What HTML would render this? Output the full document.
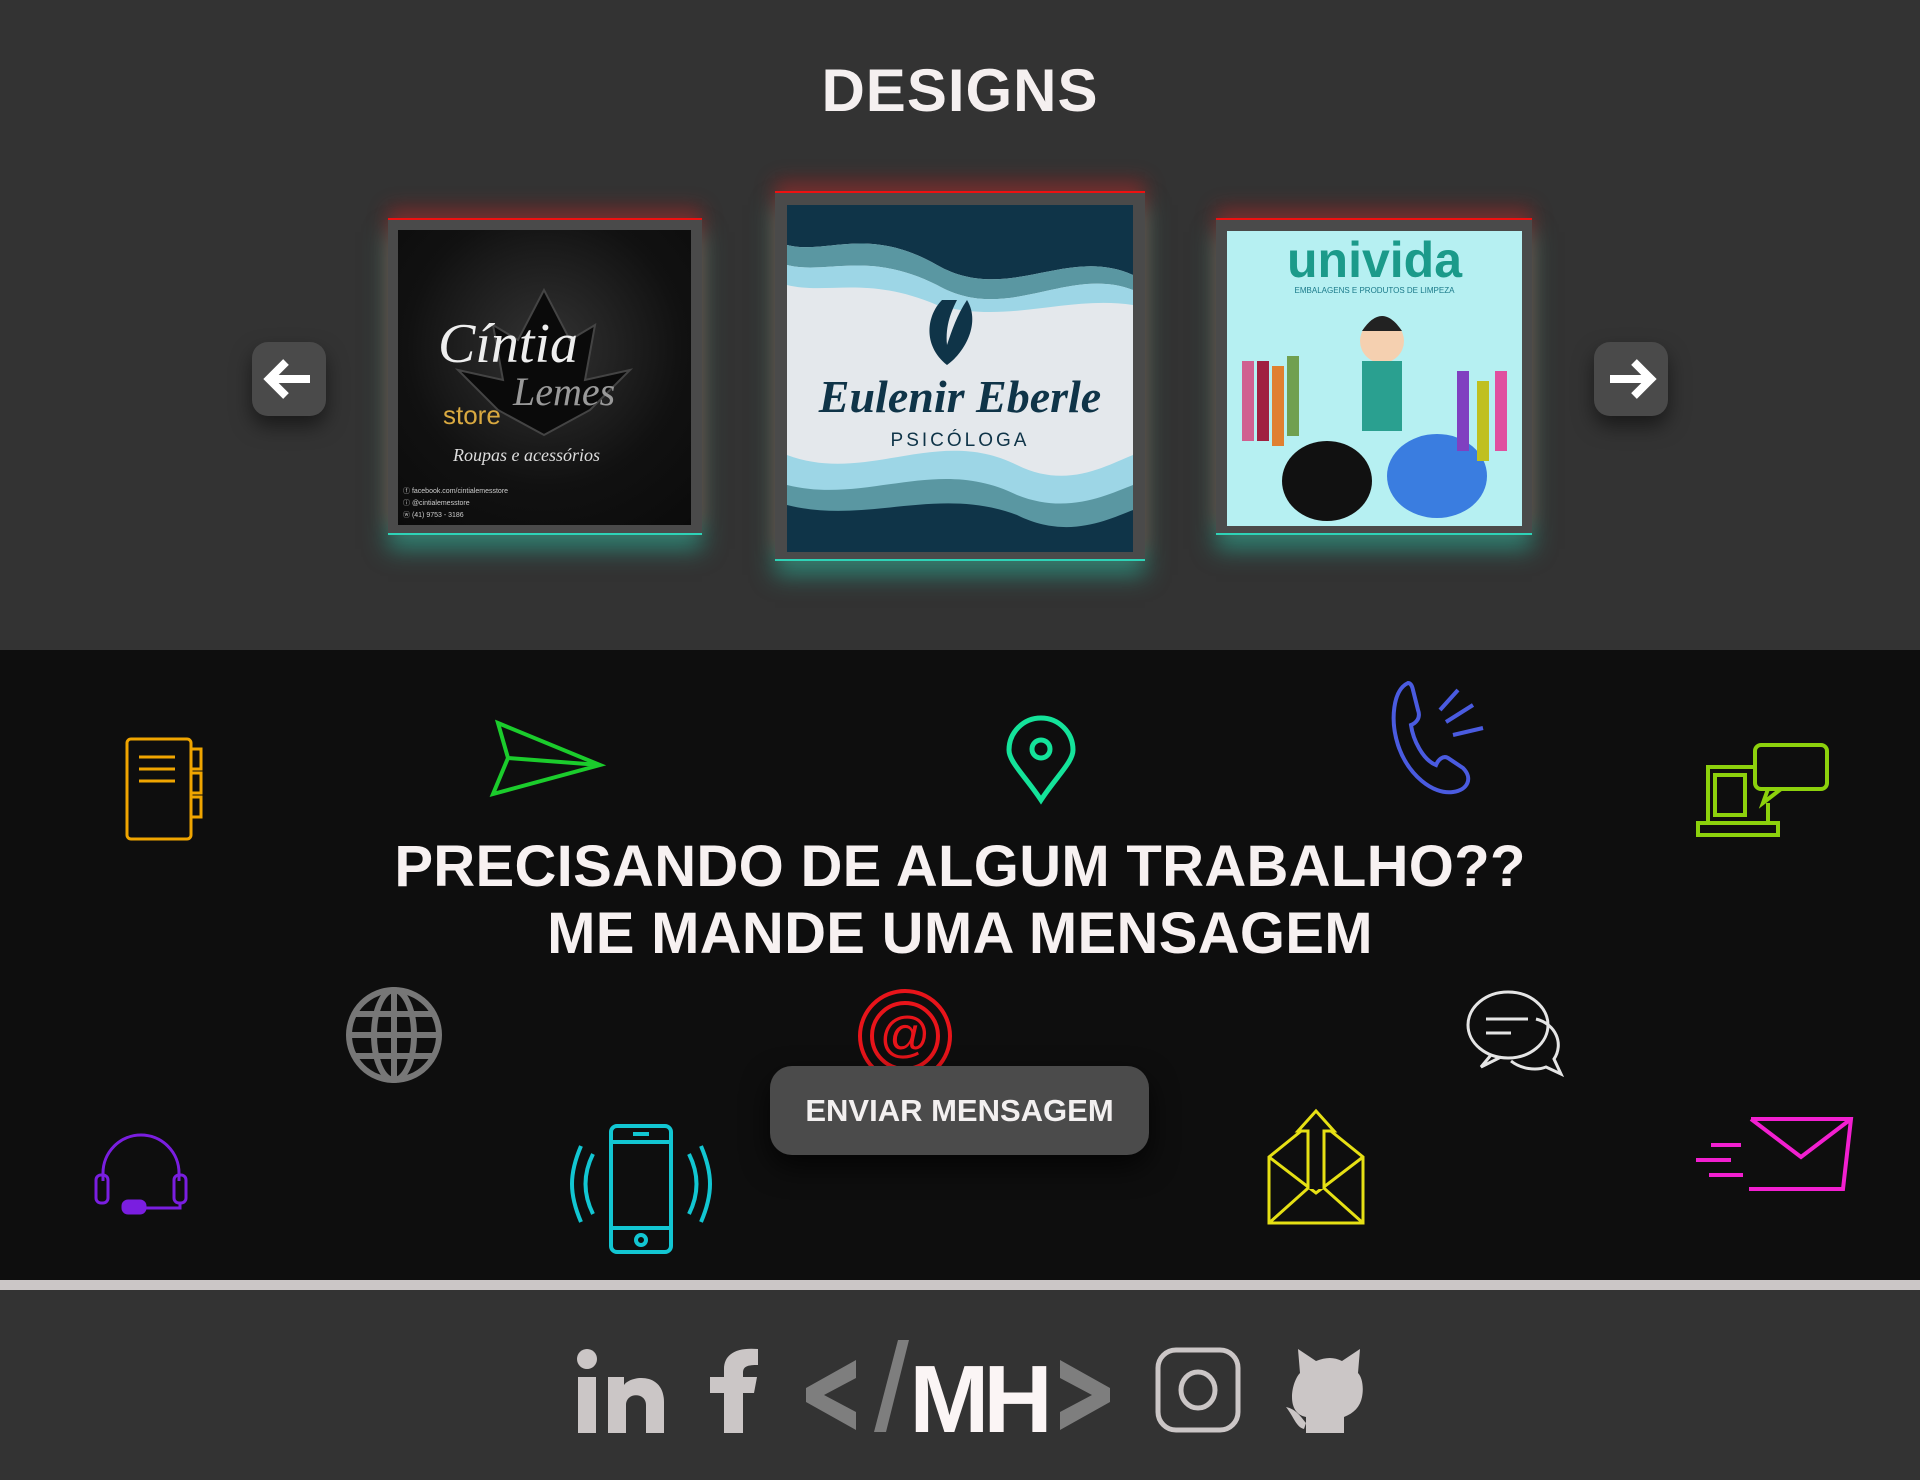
<!DOCTYPE html>
<html><head><meta charset="utf-8"><style>
*{margin:0;padding:0;box-sizing:border-box}
body{width:1920px;height:1480px;background:#333;font-family:"Liberation Sans",sans-serif;position:relative;overflow:hidden}
.abs{position:absolute}
h1{position:absolute;top:56px;left:0;width:1920px;text-align:center;color:#f5f0f0;font-size:60px;font-weight:bold;letter-spacing:1px}
.card{position:absolute;background:#4a4a4a;border-top:2px solid #e11;border-bottom:2px solid #2ed3b7;box-shadow:0 -10px 18px rgba(200,30,30,.45),0 14px 22px rgba(40,210,180,.5)}
.inner{position:absolute;overflow:hidden}
.arrow{position:absolute;width:74px;height:74px;background:#4a4a4a;border-radius:16px;box-shadow:0 10px 20px rgba(0,0,0,.5)}
.dark{position:absolute;top:650px;left:0;width:1920px;height:630px;background:#0e0e0e}
.bar{position:absolute;top:1280px;left:0;width:1920px;height:10px;background:#cbc6c6}
.head{position:absolute;left:0;width:1920px;text-align:center;color:#f7f1f1;font-weight:bold;font-size:58px;letter-spacing:.3px}
.btn{position:absolute;left:770px;top:1066px;width:379px;height:89px;background:#4b4b4b;border-radius:22px;color:#f3f0f0;font-size:31px;font-weight:bold;text-align:center;line-height:89px;box-shadow:0 12px 28px rgba(0,0,0,.7)}
svg{position:absolute;overflow:visible}
</style></head><body>
<h1>DESIGNS</h1>

<div class="card" style="left:388px;top:218px;width:314px;height:317px">
 <div class="inner" style="left:10px;top:10px;width:293px;height:295px;background:radial-gradient(circle at 50% 40%,#333 0,#111 60%,#0b0b0b 100%)">
  <svg width="293" height="295"><path d="M146 60 L120 110 L95 95 L105 150 L60 140 L100 180 L146 205 L192 180 L232 140 L187 150 L197 95 L172 110Z" fill="#0a0a0a" stroke="#444" stroke-width="2"/></svg>
  <div class="abs" style="left:40px;top:82px;font-family:'Liberation Serif',serif;font-style:italic;font-size:56px;color:#eee">Cíntia</div>
  <div class="abs" style="left:115px;top:138px;font-family:'Liberation Serif',serif;font-style:italic;font-size:40px;color:#999">Lemes</div>
  <div class="abs" style="left:45px;top:170px;font-size:26px;color:#d9a940">store</div>
  <div class="abs" style="left:55px;top:215px;font-family:'Liberation Serif',serif;font-style:italic;font-size:18px;color:#ddd">Roupas e acessórios</div>
  <div class="abs" style="left:5px;top:256px;font-size:7px;color:#ccc;line-height:12px">ⓕ facebook.com/cintialemesstore<br>ⓘ @cintialemesstore<br>ⓦ (41) 9753 - 3186</div>
 </div>
</div>

<div class="card" style="left:775px;top:191px;width:370px;height:370px">
 <div class="inner" style="left:12px;top:12px;width:346px;height:347px;background:#e4e8ec">
  <svg width="346" height="347"><path d="M0 0H346V70 C280 40 220 100 150 60 C80 20 40 50 0 40Z" fill="#0f3448"/>
  <path d="M0 40 C40 50 80 20 150 60 C220 100 280 40 346 70 V85 C280 60 220 120 150 80 C80 45 40 70 0 60Z" fill="#5a97a2"/>
  <path d="M0 60 C40 70 80 45 150 80 C220 120 280 60 346 85 V100 C280 90 220 120 150 100 C80 70 40 90 0 80Z" fill="#9dd6e6"/>
  <path d="M0 250 C80 280 150 220 230 260 C280 285 320 260 346 250 V347 H0Z" fill="#9dd6e6"/>
  <path d="M0 280 C80 300 150 250 230 290 C280 310 320 290 346 280 V347 H0Z" fill="#5a97a2"/>
  <path d="M0 300 C80 320 150 280 230 310 C280 335 320 315 346 305 V347 H0Z" fill="#0f3448"/>
  <path d="M155 95 C140 110 135 140 160 160 C175 150 195 120 180 95 C170 110 165 125 160 140 C158 120 165 105 170 95Z" fill="#0f3448"/></svg>
  <div class="abs" style="left:0;width:346px;top:165px;text-align:center;font-family:'Liberation Serif',serif;font-style:italic;font-weight:bold;font-size:46px;color:#0f3448">Eulenir Eberle</div>
  <div class="abs" style="left:0;width:346px;top:225px;text-align:center;font-size:19px;letter-spacing:3px;color:#0f3448">PSICÓLOGA</div>
 </div>
</div>

<div class="card" style="left:1216px;top:218px;width:316px;height:317px">
 <div class="inner" style="left:11px;top:11px;width:295px;height:295px;background:#b6f0f2">
  <div class="abs" style="left:0;width:295px;top:0;text-align:center;font-weight:bold;font-size:50px;color:#1b9a8a">univida</div>
  <div class="abs" style="left:0;width:295px;top:55px;text-align:center;font-size:8px;color:#1b7a8a">EMBALAGENS E PRODUTOS DE LIMPEZA</div>
  <svg width="295" height="295"><rect x="15" y="130" width="12" height="80" fill="#d06090"/><rect x="30" y="130" width="12" height="80" fill="#a02040"/><rect x="45" y="135" width="12" height="80" fill="#e08030"/><rect x="60" y="125" width="12" height="80" fill="#70a050"/>
  <circle cx="155" cy="110" r="22" fill="#f5d0b0"/><path d="M135 100 Q155 70 175 100Z" fill="#222"/><rect x="135" y="130" width="40" height="70" fill="#2aa090"/>
  <ellipse cx="100" cy="250" rx="45" ry="40" fill="#111"/><ellipse cx="210" cy="245" rx="50" ry="42" fill="#3a7de0"/>
  <rect x="230" y="140" width="12" height="80" fill="#8040c0"/><rect x="250" y="150" width="12" height="80" fill="#c0c020"/><rect x="268" y="140" width="12" height="80" fill="#e050a0"/></svg>
 </div>
</div>

<div class="arrow" style="left:252px;top:342px"><svg width="74" height="74"><path d="M58 37H18M34 20L17 37L34 54" stroke="#fff" stroke-width="8" fill="none"/></svg></div>
<div class="arrow" style="left:1594px;top:342px"><svg width="74" height="74"><path d="M16 37H56M40 20L57 37L40 54" stroke="#fff" stroke-width="8" fill="none"/></svg></div>

<div class="dark"></div>
<div class="bar"></div>

<svg style="left:125px;top:737px" width="80" height="104" fill="none" stroke="#f0a500" stroke-width="3"><rect x="2" y="2" width="64" height="100" rx="4"/><path d="M66 12h10v20h-10M66 36h10v20h-10M66 60h10v20h-10M14 20h36M14 32h36M14 44h36"/></svg>
<svg style="left:490px;top:720px" width="112" height="76" fill="none" stroke="#1bcc2c" stroke-width="4"><path d="M8 3L110 45L3 74L18 38Z M18 38L110 45"/></svg>
<svg style="left:1006px;top:717px" width="70" height="86" fill="none" stroke="#14e39a" stroke-width="5"><path d="M35 83C20 60 3 45 3 33A32 32 0 0 1 67 33C67 45 50 60 35 83Z"/><circle cx="35" cy="32" r="9"/></svg>
<svg style="left:1388px;top:680px" width="100" height="116" fill="none" stroke="#4a5be0" stroke-width="4"><path d="M20 3C5 10 2 40 10 65C20 95 45 115 65 112C80 110 85 98 75 88L60 78C55 75 50 80 48 85C35 80 25 60 23 45C28 43 33 38 30 30L25 10C24 5 22 3 20 3Z M52 30L70 10M58 42L85 25M65 55L95 48"/></svg>
<svg style="left:1693px;top:743px" width="136" height="96" fill="none" stroke="#8cd10c" stroke-width="4"><rect x="62" y="2" width="72" height="44" rx="6"/><path d="M75 46L70 60L88 46M60 24H15V80H75V60M5 80H85V92H5Z"/><rect x="22" y="32" width="30" height="40"/></svg>
<svg style="left:345px;top:986px" width="98" height="98" fill="none" stroke="#777" stroke-width="6"><circle cx="49" cy="49" r="45"/><ellipse cx="49" cy="49" rx="20" ry="45"/><path d="M49 4V94M4 49H94M10 28H88M10 70H88"/></svg>
<svg style="left:855px;top:994px" width="100" height="78" fill="none" stroke="#e8141a" stroke-width="4"><circle cx="50" cy="42" r="45"/><circle cx="50" cy="42" r="33"/><text x="50" y="58" text-anchor="middle" font-size="50" fill="#e8141a" stroke="none" font-family="Liberation Sans">@</text></svg>
<svg style="left:1466px;top:989px" width="100" height="96" fill="none" stroke="#e5e5e5" stroke-width="3"><ellipse cx="42" cy="36" rx="40" ry="33"/><path d="M20 30H62M20 44H45M25 66L15 78L35 68M70 30C90 35 98 55 88 70L95 85L80 78C70 82 55 80 45 72"/></svg>
<svg style="left:93px;top:1133px" width="96" height="80" fill="none" stroke="#7a1ee0" stroke-width="3"><path d="M10 48V40A38 38 0 0 1 86 40V48"/><rect x="3" y="42" width="12" height="28" rx="5"/><rect x="81" y="42" width="12" height="28" rx="5"/><path d="M87 70V75H45"/><rect x="30" y="68" width="22" height="12" rx="5" fill="#7a1ee0"/></svg>
<svg style="left:573px;top:1124px" width="136" height="130" fill="none" stroke="#12c6d2" stroke-width="4"><rect x="38" y="2" width="60" height="126" rx="6"/><path d="M38 18H98M38 104H98M60 10H76"/><circle cx="68" cy="116" r="5"/><path d="M20 30C10 50 10 70 20 90M8 22C-4 50 -4 70 8 98M116 30C126 50 126 70 116 90M128 22C140 50 140 70 128 98"/></svg>
<svg style="left:1266px;top:1109px" width="100" height="116" fill="none" stroke="#e6e014" stroke-width="3"><path d="M3 48V114H97V48L50 10L3 48Z M3 114L50 72L97 114 M3 48L50 84L97 48"/><path d="M42 80V22H32L50 2L68 22H58V80" fill="#0e0e0e"/></svg>
<svg style="left:1691px;top:1117px" width="162" height="76" fill="none" stroke="#f21fd0" stroke-width="4"><path d="M60 2H160L152 72H58 M60 2L110 40L160 2"/><path d="M20 28H50M5 43H40M18 58H52"/></svg>

<div class="head" style="top:833px">PRECISANDO DE ALGUM TRABALHO??</div>
<div class="head" style="top:900px">ME MANDE UMA MENSAGEM</div>
<div class="btn">ENVIAR MENSAGEM</div>

<svg style="left:576px;top:1347px" width="90" height="86" fill="#cbc6c6"><circle cx="11" cy="12" r="10"/><rect x="2" y="30" width="18" height="56"/><path d="M32 30H48V38C55 28 88 25 88 55V86H70V58C70 45 50 45 50 58V86H32Z"/></svg>
<svg style="left:710px;top:1347px" width="50" height="86" fill="#cbc6c6"><path d="M14 86V46H0V30H14V22C14 8 25 0 48 2V18C38 18 33 19 33 26V30H47L44 46H33V86Z"/></svg>
<svg style="left:806px;top:1340px" width="304" height="96"><path d="M50 20V38L18 55L50 72V90L0 62V48Z" fill="#7e7e7e"/><path d="M254 20V38L286 55L254 72V90L304 62V48Z" fill="#7e7e7e"/><path d="M68 92L92 0H103L80 92Z" fill="#7e7e7e"/><text x="172" y="92" text-anchor="middle" font-size="96" font-weight="bold" fill="#fbf5f5" font-family="Liberation Sans" letter-spacing="-6">MH</text></svg>
<svg style="left:1155px;top:1347px" width="86" height="86" fill="none" stroke="#cbc6c6" stroke-width="5"><rect x="3" y="3" width="80" height="80" rx="18"/><ellipse cx="43" cy="43" rx="17" ry="18"/></svg>
<svg style="left:1286px;top:1347px" width="78" height="86" fill="#cbc6c6"><path d="M20 86V70C10 68 6 60 6 50C6 40 10 30 14 26L12 2L30 14C40 10 48 10 56 14L74 2L72 26C76 30 78 40 76 50C74 60 68 66 58 70V86Z"/><path d="M0 60C10 62 15 70 20 76L18 82C10 80 8 70 0 60Z"/></svg>
</body></html>
